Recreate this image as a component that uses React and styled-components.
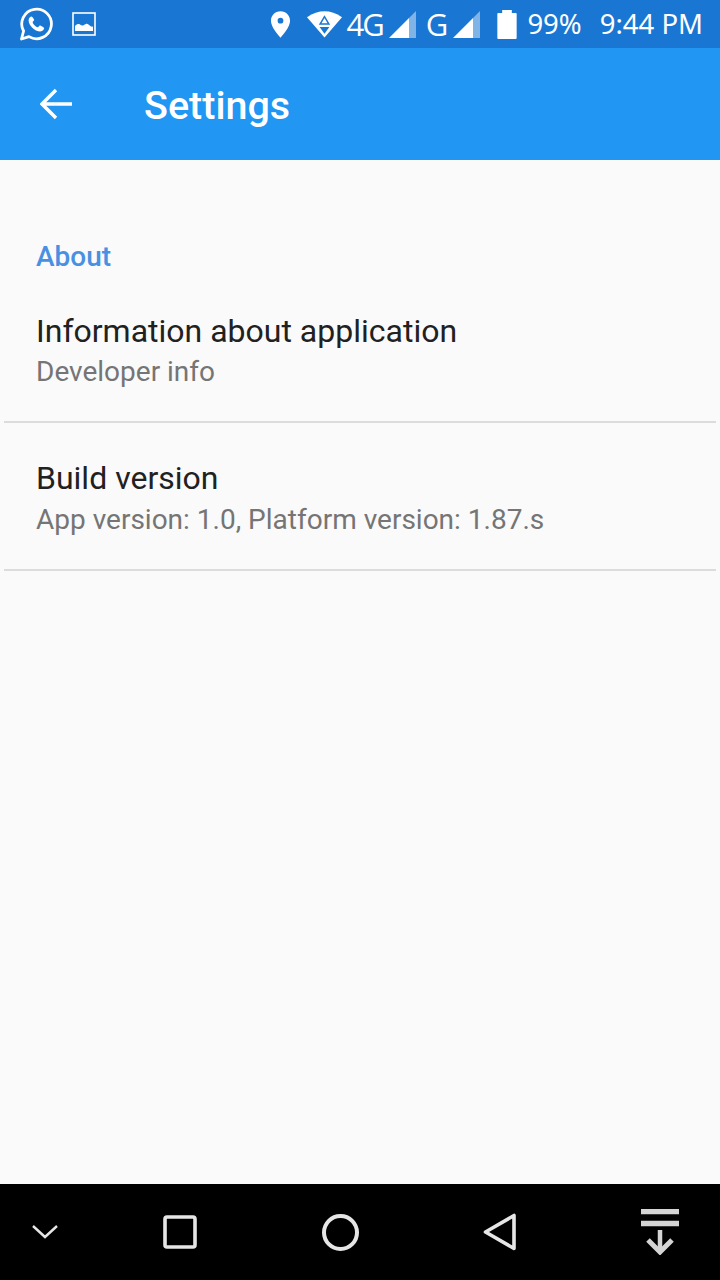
import styled, { createGlobalStyle } from "styled-components"

const Global = createGlobalStyle`
    html, body {
        margin: 0;
        padding: 0;
        background: #fafafa;
    }
    #root {
        height: 1280px;
    }
`

const Screen = styled.div`
    display: flex;
    flex-direction: column;
    width: 720px;
    height: 1280px;
    overflow: hidden;
    font-family: Roboto, "Liberation Sans", sans-serif;
    background: #fafafa;
`

const StatusBar = styled.div`
    display: flex;
    align-items: center;
    justify-content: space-between;
    height: 48px;
    padding: 0 17px 0 19px;
    background: #1976d2;
    color: #fff;
`

const StatusGroup = styled.div`
    display: flex;
    align-items: center;
`

const StatusText = styled.span`
    font-family: "Noto Sans", "Open Sans", sans-serif;
    font-size: 27.5px;
    line-height: 48px;
    margin-left: ${p => p.$left || 0}px;
`

const NetworkText = styled.span`
    font-family: "Open Sans", "Noto Sans", sans-serif;
    font-size: 31px;
    line-height: 48px;
    letter-spacing: ${p => p.$spacing || 0}px;
    margin-left: ${p => p.$left || 0}px;
`

const StatusIcon = styled.svg`
    display: block;
    margin-left: ${p => p.$left || 0}px;
`

const Toolbar = styled.header`
    display: flex;
    align-items: center;
    height: 112px;
    padding-left: 40px;
    background: #2196f3;
    color: #fff;
`

const BackIcon = styled.svg`
    display: block;
    margin-top: -1px;
`

const Title = styled.h1`
    margin: 3px 0 0 72px;
    font-size: 39.5px;
    font-weight: 500;
    line-height: 109px;
`

const Content = styled.main`
    flex: 1;
    padding-top: 64px;
`

const SectionTitle = styled.h2`
    margin: 0;
    padding: 17px 36px 0;
    font-size: 28px;
    font-weight: 500;
    line-height: 32px;
    color: #4a90e2;
`

const Item = styled.div`
    margin: 0 4px;
    padding: ${p => (p.$first ? 36 : 33)}px 32px ${p => (p.$first ? 30 : 30)}px;
    border-bottom: 2px solid #dcdcdc;
`

const ItemTitle = styled.div`
    font-size: 32px;
    line-height: 44px;
    color: #212121;
`

const ItemSubtitle = styled.div`
    margin-top: ${p => p.$top || 0}px;
    font-size: 28px;
    line-height: 38px;
    color: #757575;
`

const NavBar = styled.nav`
    display: grid;
    grid-template-columns: 100px repeat(4, 160px);
    justify-items: center;
    align-items: center;
    height: 96px;
    background: #000;
`

const NavIcon = styled.svg`
    display: block;
    color: #e6e6e6;
    margin-right: ${p => p.$right || 0}px;
`

const Signal = ({ left }) => (
    <StatusIcon $left={left} width="27" height="27" viewBox="0 0 27 27">
        <path d="M20 7l7-7v27h-7z" fill="#fff" opacity=".45" />
        <path d="M0 27L20 7v20z" fill="#fff" />
    </StatusIcon>
)

function App() {
    return (
        <Screen>
            <Global />
            <StatusBar>
                <StatusGroup>
                    <StatusIcon width="34" height="34" viewBox="0 0 34 34" fill="none">
                        <path d="M2.500 32l2.100-8A14.800 14.800 0 1 1 10 29.600z" stroke="#fff" strokeWidth="2.800" strokeLinejoin="round" />
                        <path d="M12.400 9.400c-1 0-2.800 1.400-2.800 4 0 4.600 6 11 11.600 11 2.600 0 4-2 4-3.300 0-.7-3.600-2.700-4.300-2.700-.8 0-1.400 1.800-2.200 1.800-1.700 0-5-3.400-5-5 0-.8 1.500-1.300 1.500-2.100 0-.7-1.700-3.700-2.800-3.700z" fill="#fff" />
                    </StatusIcon>
                    <StatusIcon $left={19} width="24" height="24" viewBox="0 0 24 24" fill="none">
                        <rect x="1" y="1" width="22" height="22" stroke="#fff" strokeWidth="1.600" />
                        <path d="M3 19v-5c2-2 3.500-2.500 5-1.500s2.500 1.500 4 .5 3-2 4.500-.5 3 2.500 4.500 2v4.500z" fill="#fff" />
                    </StatusIcon>
                </StatusGroup>
                <StatusGroup>
                    <StatusIcon width="21" height="29" viewBox="0 0 22 30">
                        <path fillRule="evenodd" d="M11 1C5.300 1 1 5.400 1 11c0 6.500 7 14 10 18 3-4 10-11.500 10-18C21 5.400 16.700 1 11 1zm0 7a3 3 0 1 1 0 6 3 3 0 0 1 0-6z" fill="#fff" />
                    </StatusIcon>
                    <StatusIcon $left={16} width="35" height="28" viewBox="0 0 36 28">
                        <path d="M0 7Q18-5 36 7L18 28z" fill="#fff" />
                        <path d="M18 6.500l-4.500 7.500h9z" fill="none" stroke="#1976d2" strokeWidth="1.500" />
                        <path d="M13 17h10l-5 7z" fill="#1976d2" />
                    </StatusIcon>
                    <NetworkText $left={5} $spacing={-2}>4G</NetworkText>
                    <Signal left={6} />
                    <NetworkText $left={10}>G</NetworkText>
                    <Signal left={5} />
                    <StatusIcon $left={17} width="20" height="29" viewBox="0 0 20 30">
                        <path d="M5 3V0h10v3h4a1 1 0 0 1 1 1v25a1 1 0 0 1-1 1H1a1 1 0 0 1-1-1V4a1 1 0 0 1 1-1z" fill="#fff" />
                    </StatusIcon>
                    <StatusText $left={10}>99%</StatusText>
                    <StatusText $left={18}>9:44 PM</StatusText>
                </StatusGroup>
            </StatusBar>
            <Toolbar>
                <BackIcon width="32" height="32" viewBox="0 0 32 32" fill="none">
                    <path d="M32 16H3M16 2L2 16l14 14" stroke="#fff" strokeWidth="3.400" />
                </BackIcon>
                <Title>Settings</Title>
            </Toolbar>
            <Content>
                <SectionTitle>About</SectionTitle>
                <Item $first>
                    <ItemTitle>Information about application</ItemTitle>
                    <ItemSubtitle>Developer info</ItemSubtitle>
                </Item>
                <Item>
                    <ItemTitle>Build version</ItemTitle>
                    <ItemSubtitle $top={1}>App version: 1.0, Platform version: 1.87.s</ItemSubtitle>
                </Item>
            </Content>
            <NavBar>
                <NavIcon $right={10} width="26" height="16" viewBox="0 0 26 16" fill="none">
                    <path d="M1 2l12 11L25 2" stroke="currentColor" strokeWidth="2.400" />
                </NavIcon>
                <NavIcon width="34" height="34" viewBox="0 0 34 34" fill="none">
                    <rect x="2" y="2" width="30" height="30" rx="2" stroke="currentColor" strokeWidth="3.600" />
                </NavIcon>
                <NavIcon width="37" height="37" viewBox="0 0 37 37" fill="none">
                    <circle cx="18.500" cy="18.500" r="16.500" stroke="currentColor" strokeWidth="4" />
                </NavIcon>
                <NavIcon width="34" height="38" viewBox="0 0 34 38" fill="none">
                    <path d="M31 2.500v33L2.500 19z" stroke="currentColor" strokeWidth="3.600" strokeLinejoin="round" />
                </NavIcon>
                <NavIcon width="38" height="46" viewBox="0 0 38 46" fill="none">
                    <path d="M0 2.500h38M0 14.500h38" stroke="#d4d4d4" strokeWidth="5.500" />
                    <path d="M19 21v20" stroke="#d4d4d4" strokeWidth="4.500" />
                    <path d="M7 31l12 12 12-12" stroke="#d4d4d4" strokeWidth="5" />
                </NavIcon>
            </NavBar>
        </Screen>
    )
}

export default App
